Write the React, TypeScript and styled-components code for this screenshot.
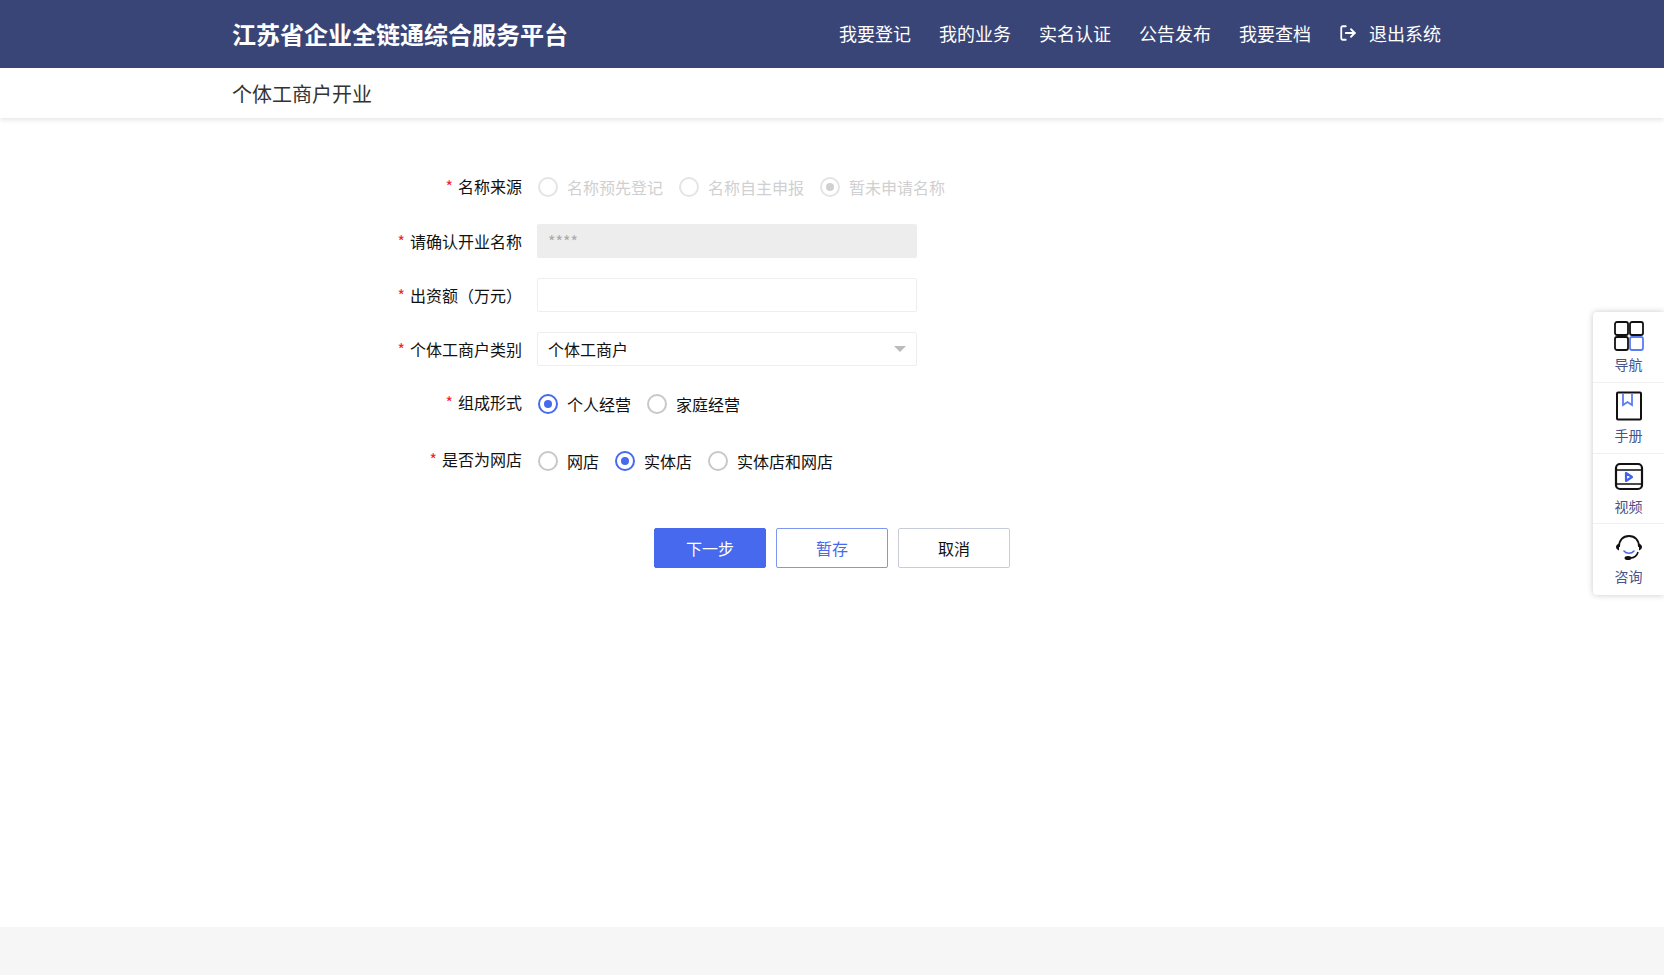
import React from "react";
import styled, { createGlobalStyle } from "styled-components";
import { LogOut } from "lucide-react";

const GlobalStyle = createGlobalStyle`
  html, body {
    margin: 0;
    padding: 0;
    height: 100%;
    background: #fff;
    font-family: "Noto Sans CJK SC", "Liberation Sans", sans-serif;
  }
  * { box-sizing: border-box; }
`;

const Page = styled.div`
  position: relative;
  display: flex;
  flex-direction: column;
  height: 975px;
  overflow: hidden;
`;

const Header = styled.header`
  display: flex;
  align-items: center;
  justify-content: space-between;
  height: 68px;
  flex-shrink: 0;
  padding: 0 223px 0 232px;
  background: #3a4577;
  color: #fff;
`;

const Logo = styled.div`
  font-size: 24px;
  font-weight: 700;
  white-space: nowrap;
  margin-top: -2px;
`;

const Nav = styled.nav`
  display: flex;
  align-items: center;
  gap: 28px;
  margin-top: -2px;
`;

const NavLink = styled.a`
  display: flex;
  align-items: center;
  gap: 12px;
  font-size: 18px;
  font-weight: 400;
  color: #fff;
`;

const SubHeader = styled.div`
  display: flex;
  align-items: center;
  height: 50px;
  flex-shrink: 0;
  padding-left: 232px;
  font-size: 20px;
  font-weight: 400;
  color: #333;
  box-shadow: 0 2px 5px rgba(0, 0, 0, 0.1);
`;

const Main = styled.main`
  flex: 1;
  padding-top: 42px;
`;

const Row = styled.div<{ $height: number }>`
  display: flex;
  align-items: center;
  height: ${({ $height }) => $height}px;
`;

const Label = styled.label<{ $raised?: boolean }>`
  width: 522px;
  margin-right: 15px;
  padding-bottom: ${({ $raised }) => ($raised ? "3px" : "0")};
  text-align: right;
  font-size: 16px;
  color: #111;
  flex-shrink: 0;
`;

const Star = styled.span`
  color: #f5222d;
  margin-right: 5px;
`;

const Field = styled.div`
  display: flex;
  align-items: center;
  justify-content: space-between;
  width: 380px;
  height: 34px;
  padding: 0 10px;
  border: 1px solid #eee;
  border-radius: 2px;
  font-size: 16px;
  color: #111;
`;

const DisabledField = styled(Field)`
  background: #ededed;
  border-color: #ededed;
  color: #aaa;
  padding-bottom: 1px;
`;

const Caret = styled.span`
  width: 0;
  height: 0;
  border-left: 6px solid transparent;
  border-right: 6px solid transparent;
  border-top: 6px solid #bbb;
`;

const RadioGroup = styled.div`
  display: flex;
  align-items: center;
  gap: 16px;
  padding-left: 1px;
`;

const RadioItem = styled.span<{ $disabled?: boolean }>`
  display: flex;
  align-items: center;
  gap: 9px;
  font-size: 16px;
  color: ${({ $disabled }) => ($disabled ? "#d0d0d0" : "#111")};
`;

const RadioMark = styled.span<{ $checked?: boolean; $disabled?: boolean }>`
  position: relative;
  width: 20px;
  height: 20px;
  border-radius: 50%;
  flex-shrink: 0;
  border: 2px solid
    ${({ $checked, $disabled }) =>
      $disabled ? "#e4e4e4" : $checked ? "#4669ee" : "#c8c8c8"};

  &::after {
    content: "";
    display: ${({ $checked }) => ($checked ? "block" : "none")};
    position: absolute;
    left: 4px;
    top: 4px;
    width: 8px;
    height: 8px;
    border-radius: 50%;
    background: ${({ $disabled }) => ($disabled ? "#d0d0d0" : "#4669ee")};
  }
`;

const Actions = styled.div`
  display: flex;
  gap: 10px;
  margin-top: 38px;
  padding-left: 654px;
`;

const Button = styled.button<{ $variant: "primary" | "outline" | "plain" }>`
  width: 112px;
  height: 40px;
  border-radius: 2px;
  font-family: inherit;
  font-size: 16px;
  border: 1px solid
    ${({ $variant }) => ($variant === "plain" ? "#c8ccd6" : $variant === "outline" ? "#7f97f2" : "#4669ee")};
  background: ${({ $variant }) => ($variant === "primary" ? "#4669ee" : "#fff")};
  color: ${({ $variant }) =>
    $variant === "primary" ? "#fff" : $variant === "outline" ? "#4669ee" : "#111"};
`;

const Footer = styled.footer`
  height: 48px;
  flex-shrink: 0;
  background: #f6f6f6;
`;

const Sidebar = styled.aside`
  position: absolute;
  top: 312px;
  right: 0;
  width: 71px;
  background: #fff;
  border-radius: 4px 0 0 4px;
  box-shadow: 0 0 6px rgba(0, 0, 0, 0.22);
`;

const SideItem = styled.div`
  display: flex;
  flex-direction: column;
  align-items: center;
  height: 70.75px;
  padding-top: 8px;
  font-size: 14px;
  line-height: 20px;
  color: #46528a;
  border-bottom: 1px solid #f0f0f0;

  &:last-child {
    border-bottom: none;
  }
`;

const SideIcon = styled.svg`
  width: 32px;
  height: 32px;
  margin-bottom: 2px;
  flex-shrink: 0;
`;

const NavIcon = () => (
  <SideIcon viewBox="0 0 32 32" fill="none" strokeWidth="1.8">
    <rect x="2" y="2" width="13" height="13" rx="2" stroke="#111" />
    <rect x="17" y="2" width="13" height="13" rx="2" stroke="#111" />
    <rect x="2" y="17" width="13" height="13" rx="2" stroke="#111" />
    <rect x="17" y="17" width="13" height="13" rx="2" stroke="#5b7cf2" />
  </SideIcon>
);

const BookIcon = () => (
  <SideIcon viewBox="0 0 32 32" fill="none">
    <rect x="4" y="1.5" width="24" height="27" rx="1" stroke="#111" strokeWidth="2" />
    <path d="M10 3v11l4.5-3 4.5 3V3" stroke="#5b7cf2" strokeWidth="1.8" />
  </SideIcon>
);

const VideoIcon = () => (
  <SideIcon viewBox="0 0 32 32" fill="none">
    <rect x="3" y="2" width="26" height="25" rx="4" stroke="#111" strokeWidth="2.2" />
    <path d="M3 8h26M3 22h26" stroke="#111" strokeWidth="1.6" />
    <path d="M13 11v8l6-4z" stroke="#3f63ee" strokeWidth="2.2" strokeLinejoin="round" />
  </SideIcon>
);

const HeadsetIcon = () => (
  <SideIcon viewBox="0 0 32 32" fill="none">
    <path d="M6 15c0-7 4-11 10-11s10 4 10 11" stroke="#111" strokeWidth="1.8" />
    <path d="M6 11.5c-2 1-3 2-3 3.5s1 2.5 3 3.5zM26 11.5c2 1 3 2 3 3.5s-1 2.5-3 3.5z" fill="#111" />
    <path d="M11 19c2.5 3 7.5 3 10 0" stroke="#4669ee" strokeWidth="1.6" strokeLinecap="round" />
    <path d="M25 20c-1 4-4 6-8 6" stroke="#111" strokeWidth="1.6" />
    <ellipse cx="15" cy="26" rx="3.5" ry="2" fill="#111" />
  </SideIcon>
);

const navItems = ["我要登记", "我的业务", "实名认证", "公告发布", "我要查档"];

type Option = { text: string; checked?: boolean };

const Radios: React.FC<{ options: Option[]; disabled?: boolean }> = ({ options, disabled }) => (
  <RadioGroup>
    {options.map((o) => (
      <RadioItem key={o.text} $disabled={disabled}>
        <RadioMark $checked={o.checked} $disabled={disabled} />
        {o.text}
      </RadioItem>
    ))}
  </RadioGroup>
);

export default function App() {
  return (
    <Page>
      <GlobalStyle />
      <Header>
        <Logo>江苏省企业全链通综合服务平台</Logo>
        <Nav>
          {navItems.map((n) => (
            <NavLink key={n}>{n}</NavLink>
          ))}
          <NavLink>
            <LogOut size={18} strokeWidth={2.4} />
            退出系统
          </NavLink>
        </Nav>
      </Header>
      <SubHeader>个体工商户开业</SubHeader>
      <Main>
        <Row $height={54}>
          <Label $raised><Star>*</Star>名称来源</Label>
          <Radios
            disabled
            options={[
              { text: "名称预先登记" },
              { text: "名称自主申报" },
              { text: "暂未申请名称", checked: true },
            ]}
          />
        </Row>
        <Row $height={54}>
          <Label><Star>*</Star>请确认开业名称</Label>
          <DisabledField>****</DisabledField>
        </Row>
        <Row $height={54}>
          <Label><Star>*</Star>出资额（万元）</Label>
          <Field />
        </Row>
        <Row $height={54}>
          <Label><Star>*</Star>个体工商户类别</Label>
          <Field>
            个体工商户
            <Caret />
          </Field>
        </Row>
        <Row $height={55}>
          <Label $raised><Star>*</Star>组成形式</Label>
          <Radios options={[{ text: "个人经营", checked: true }, { text: "家庭经营" }]} />
        </Row>
        <Row $height={59}>
          <Label $raised><Star>*</Star>是否为网店</Label>
          <Radios options={[{ text: "网店" }, { text: "实体店", checked: true }, { text: "实体店和网店" }]} />
        </Row>
        <Actions>
          <Button $variant="primary">下一步</Button>
          <Button $variant="outline">暂存</Button>
          <Button $variant="plain">取消</Button>
        </Actions>
      </Main>
      <Footer />
      <Sidebar>
        <SideItem><NavIcon />导航</SideItem>
        <SideItem><BookIcon />手册</SideItem>
        <SideItem><VideoIcon />视频</SideItem>
        <SideItem><HeadsetIcon />咨询</SideItem>
      </Sidebar>
    </Page>
  );
}
